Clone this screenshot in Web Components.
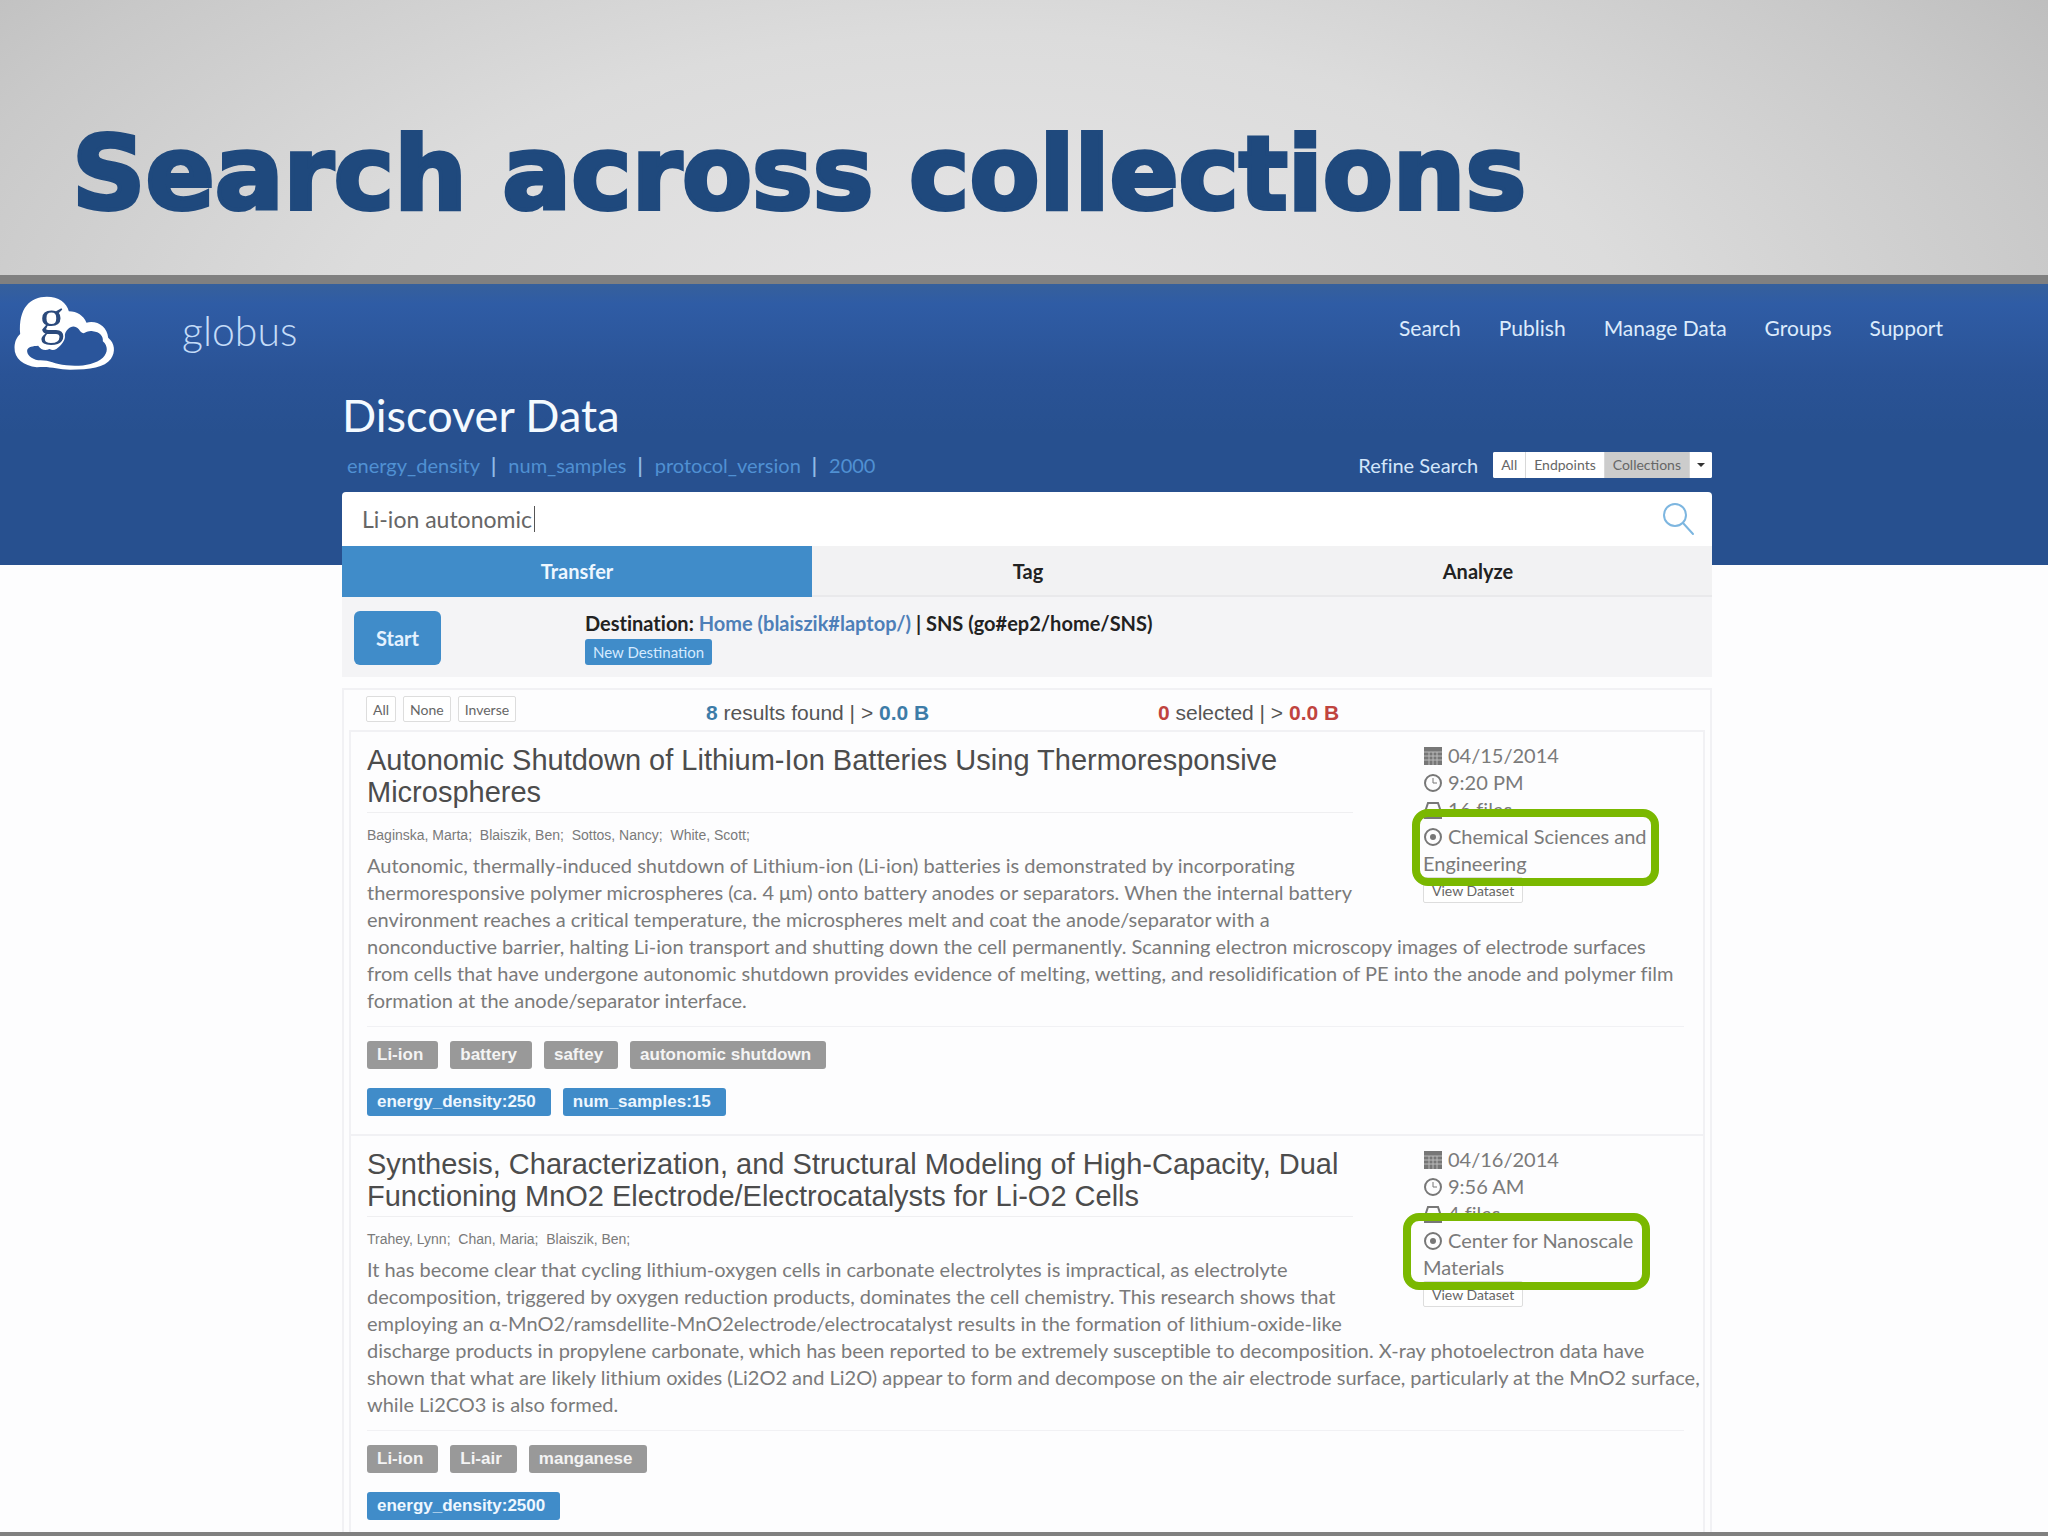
<!DOCTYPE html>
<html lang="en">
<head>
<meta charset="utf-8">
<title>Search across collections</title>
<style>
  body {
    margin: 0;
    background: #fdfdfe;
    font-family: Lato, "Open Sans", sans-serif;
    font-variant-ligatures: none;
    color: #7a7a7a;
  }
</style>
</head>
<body>

<slide-frame>
  <slide-title slot="title">Search across collections</slide-title>

  <globus-header>
    <a href="#search">Search</a>
    <a href="#publish">Publish</a>
    <a href="#manage">Manage Data</a>
    <a href="#groups">Groups</a>
    <a href="#support">Support</a>
  </globus-header>

  <discover-search query="Li-ion autonomic">
    <a href="#energy_density">energy_density</a>
    <a href="#num_samples">num_samples</a>
    <a href="#protocol_version">protocol_version</a>
    <a href="#2000">2000</a>
  </discover-search>

  <transfer-panel></transfer-panel>

  <result-list>
    <dataset-result date="04/15/2014" time="9:20 PM" files="16 files">
      <span slot="title">Autonomic Shutdown of Lithium-Ion Batteries Using Thermoresponsive<br>Microspheres</span>
      <span slot="authors">Baginska, Marta; &nbsp;Blaiszik, Ben; &nbsp;Sottos, Nancy; &nbsp;White, Scott;</span>
      <span slot="collection">Chemical Sciences and<br>Engineering</span>
      Autonomic, thermally-induced shutdown of Lithium-ion (Li-ion) batteries is demonstrated by incorporating<br>
      thermoresponsive polymer microspheres (ca. 4 μm) onto battery anodes or separators. When the internal battery<br>
      environment reaches a critical temperature, the microspheres melt and coat the anode/separator with a<br>
      nonconductive barrier, halting Li-ion transport and shutting down the cell permanently. Scanning electron microscopy images of electrode surfaces<br>
      from cells that have undergone autonomic shutdown provides evidence of melting, wetting, and resolidification of PE into the anode and polymer film<br>
      formation at the anode/separator interface.
      <tag-label slot="tags">Li-ion</tag-label>
      <tag-label slot="tags">battery</tag-label>
      <tag-label slot="tags">saftey</tag-label>
      <tag-label slot="tags">autonomic shutdown</tag-label>
      <tag-label slot="values" kind="value">energy_density:250</tag-label>
      <tag-label slot="values" kind="value">num_samples:15</tag-label>
    </dataset-result>

    <dataset-result date="04/16/2014" time="9:56 AM" files="4 files" style="--mark-left: -20px">
      <span slot="title">Synthesis, Characterization, and Structural Modeling of High-Capacity, Dual<br>Functioning MnO2 Electrode/Electrocatalysts for Li-O2 Cells</span>
      <span slot="authors">Trahey, Lynn; &nbsp;Chan, Maria; &nbsp;Blaiszik, Ben;</span>
      <span slot="collection">Center for Nanoscale<br>Materials</span>
      It has become clear that cycling lithium-oxygen cells in carbonate electrolytes is impractical, as electrolyte<br>
      decomposition, triggered by oxygen reduction products, dominates the cell chemistry. This research shows that<br>
      employing an α-MnO2/ramsdellite-MnO2electrode/electrocatalyst results in the formation of lithium-oxide-like<br>
      discharge products in propylene carbonate, which has been reported to be extremely susceptible to decomposition. X-ray photoelectron data have<br>
      shown that what are likely lithium oxides (Li2O2 and Li2O) appear to form and decompose on the air electrode surface, particularly at the MnO2 surface,<br>
      while Li2CO3 is also formed.
      <tag-label slot="tags">Li-ion</tag-label>
      <tag-label slot="tags">Li-air</tag-label>
      <tag-label slot="tags">manganese</tag-label>
      <tag-label slot="values" kind="value">energy_density:2500</tag-label>
    </dataset-result>
  </result-list>
</slide-frame>

<script>
// every element below renders its markup once, into an open root
class BaseElement extends HTMLElement {
  connectedCallback() {
    if (this.shadowRoot) return;
    this.attachShadow({ mode: "open" });
    this.shadowRoot.innerHTML = this._styles() + this._markup();
  }

  _styles() {
    return "";
  }

  _markup() {
    return "<slot></slot>";
  }
}

class SlideFrame extends BaseElement {
  _styles() {
    return `
    <style>
    :host {
      display: flex;
      flex-direction: column;
      height: 100vh;
      overflow: hidden;
    }

    .page {
      flex: 1;
      min-height: 0;
      overflow: hidden;
      border-top: 9px solid #808080;
      border-bottom: 4px solid #808080;
      background: linear-gradient(#36609c, #2f5ca5 20px, #2a5396 90px, #27508f 150px) no-repeat 0 0 / 100% 281px;
    }
    </style>
    `;
  }

  _markup() {
    return `
    <slot name="title"></slot>
    <main class="page"><slot></slot></main>
    `;
  }
}

class SlideTitle extends BaseElement {
  _styles() {
    return `
    <style>
    :host {
      display: block;
      flex: none;
      background: radial-gradient(1450px 720px at 48% 130%, #e8e7e8, #dcdcdc 45%, #c9c9c9 75%, #b6b6b6);
    }

    h1 {
      margin: 0;
      padding: 114px 72px 41px;
      font: bold 102px/120px "DejaVu Sans", sans-serif;
      -webkit-text-stroke: 4px #1f497d;
      color: #1f497d;
      white-space: nowrap;
    }
    </style>
    `;
  }

  _markup() {
    return `<h1><slot></slot></h1>`;
  }
}

class GlobusHeader extends BaseElement {
  _styles() {
    return `
    <style>
    :host {
      display: flex;
      align-items: center;
      padding: 12px 105px 0 14px;
      height: 74px;
    }

    svg {
      width: 101px;
      height: 74px;
      margin-right: 67px;
      overflow: visible;
    }

    .brand {
      flex: 1;
      padding-bottom: 6px;
      font-size: 41px;
      font-weight: 300;
      color: #c4dcf8;
    }

    nav {
      display: flex;
      gap: 38px;
      padding-bottom: 12px;
      font-size: 21px;
    }

    ::slotted(a) {
      color: #dcebfc;
      text-decoration: none;
    }
    </style>
    `;
  }

  _markup() {
    return `
    <svg viewBox="42 76 302 222" aria-hidden="true">
      <path fill="#fff" d="M60 190C54 112 90 78 140 78c35 0 60 18 66 44 25 0 44 13 53 34 32-8 62 12 65 45 20 16 23 42 8 64-18 25-62 32-122 32-40 0-60-12-100-7-40-5-68-25-67-60 1-20 7-30 17-40z"/>
      <path fill="#2a559b" d="M203 176c10-10 22-12 33 0 5 9 12 14 18 10 8-3 14-6 24-4 20 2 32 14 30 30 16 14 16 34 0 49-24 22-69 27-109 23s-51-17-85-15c-20-4-35-17-33-31 3-10 18-12 33-13 8 12 20 16 34 10 12 6 20 2 32-10 12-12 16-24 14-33 2-8 5-12 9-16z"/>
      <text x="155" y="190" text-anchor="middle" font-family="Liberation Serif, serif" font-size="150" fill="#2b4a7c">g</text>
    </svg>
    <span class="brand">globus</span>
    <nav><slot></slot></nav>
    `;
  }
}

class DiscoverSearch extends BaseElement {
  _styles() {
    return `
    <style>
    :host {
      display: block;
      padding: 17px 336px 0 342px;
    }

    h2 {
      margin: 0;
      font-size: 45px;
      font-weight: 400;
      line-height: 56px;
      color: #f4faff;
    }

    .row {
      display: flex;
      align-items: center;
      justify-content: space-between;
      height: 43px;
      padding-bottom: 6px;
    }

    .recent {
      display: flex;
      padding-left: 5px;
      font-size: 20px;
    }

    ::slotted(a) {
      color: #5090d3;
      text-decoration: none;
    }

    ::slotted(a:not(:last-of-type))::after {
      content: "|";
      padding: 0 12px 0 11px;
      font-weight: 700;
      color: #8fbbe8;
    }

    .refine {
      display: flex;
      align-items: center;
      gap: 15px;
      font-size: 20px;
      color: #d3e6fa;
    }

    .group {
      display: flex;
      height: 26px;
      border-radius: 2px;
      overflow: hidden;
      background: #fff;
    }

    .group button {
      padding: 0 8px;
      border: 0;
      border-right: 1px solid #d8d8d8;
      background: #fff;
      color: #666;
      font: 14px Lato, sans-serif;
    }

    .group .on {
      background: #ccc;
    }

    .group button:last-child {
      padding: 0 7px;
      border-right: 0;
    }

    .caret {
      display: block;
      border: 4px solid transparent;
      border-top-color: #333;
      border-bottom: 0;
    }

    .box {
      display: flex;
      align-items: center;
      height: 54px;
      padding: 0 17px 0 20px;
      border-radius: 4px 4px 0 0;
      background: #fff;
    }

    input {
      field-sizing: content;
      padding: 0;
      border: 0;
      outline: 0;
      background: none;
      font: 23px Lato, sans-serif;
      color: #666;
    }

    .cursor {
      width: 1px;
      height: 26px;
      margin-left: 2px;
      background: #555;
    }

    .go {
      margin-left: auto;
      padding: 0;
      border: 0;
      background: none;
    }

    .go svg {
      display: block;
      width: 34px;
      height: 34px;
    }
    </style>
    `;
  }

  _markup() {
    return `
    <h2>Discover Data</h2>
    <div class="row">
      <div class="recent"><slot></slot></div>
      <div class="refine">
        <span id="refine">Refine Search</span>
        <div class="group" role="group" aria-labelledby="refine">
          <button>All</button><button>Endpoints</button><button class="on">Collections</button><button aria-label="More"><span class="caret"></span></button>
        </div>
      </div>
    </div>
    <div class="box">
      <input type="text" aria-label="Search" value="${this.getAttribute("query")}">
      <span class="cursor"></span>
      <button class="go" aria-label="Run search">
        <svg viewBox="0 0 34 34" fill="none" stroke="#7db6e0" stroke-width="2" stroke-linecap="round">
          <circle cx="14" cy="13" r="11"/><path d="M22 21l10 11"/>
        </svg>
      </button>
    </div>
    `;
  }
}

class TransferPanel extends BaseElement {
  _styles() {
    return `
    <style>
    :host {
      display: block;
      margin: 0 336px 0 342px;
      background: #f4f4f6;
    }

    .tabs {
      display: grid;
      grid-template-columns: 470fr 432fr 468fr;
      height: 51px;
    }

    button {
      font-family: Lato, sans-serif;
      border: 0;
    }

    .tabs button {
      background: #f2f2f3;
      border-bottom: 2px solid #e9e9eb;
      font-size: 20px;
      font-weight: 700;
      color: #222;
    }

    .tabs .on {
      background: #408cc9;
      border-color: #408cc9;
      color: #eef7ff;
    }

    .body {
      display: flex;
      align-items: flex-start;
      gap: 144px;
      padding: 14px 12px 12px;
    }

    .start {
      width: 87px;
      height: 54px;
      border-radius: 6px;
      background: #408cc9;
      color: #e4f2ff;
      font-size: 20px;
      font-weight: 700;
    }

    p {
      margin: 0 0 4px;
      font-size: 20px;
      line-height: 24px;
      font-weight: 700;
      color: #222;
    }

    a {
      color: #4e7fb8;
      text-decoration: none;
    }

    .new {
      display: block;
      height: 26px;
      padding: 0 8px;
      border-radius: 3px;
      background: #408cc9;
      color: #d5eaff;
      font-size: 15px;
    }
    </style>
    `;
  }

  _markup() {
    return `
    <div class="tabs" role="tablist">
      <button role="tab" class="on">Transfer</button>
      <button role="tab">Tag</button>
      <button role="tab">Analyze</button>
    </div>
    <div class="body">
      <button class="start">Start</button>
      <div>
        <p>Destination: <a href="#home">Home (blaiszik#laptop/)</a> | SNS (go#ep2/home/SNS)</p>
        <button class="new">New Destination</button>
      </div>
    </div>
    `;
  }
}

class ResultList extends BaseElement {
  _styles() {
    return `
    <style>
    :host {
      display: block;
      margin: 11px 336px 0 342px;
      padding: 0 5px;
      border: 2px solid #f1f1f4;
    }

    .bar {
      display: grid;
      grid-template-columns: 340px 452px 1fr;
      align-items: start;
      height: 34px;
      padding: 6px 0 0 17px;
      font: 21px/34px "Liberation Sans", sans-serif;
      color: #555;
    }

    .pick {
      display: flex;
      gap: 7px;
    }

    button {
      height: 26px;
      padding: 0 6px;
      border: 1px solid #ddd;
      border-radius: 2px;
      background: #fff;
      color: #666;
      font: 14px Lato, sans-serif;
    }

    .found b {
      color: #3d7ca8;
    }

    .selected b {
      color: #c0443f;
    }
    </style>
    `;
  }

  _markup() {
    return `
    <div class="bar">
      <div class="pick"><button>All</button><button>None</button><button>Inverse</button></div>
      <div class="found"><b>8</b> results found | &gt; <b>0.0 B</b></div>
      <div class="selected"><b>0</b> selected | &gt; <b>0.0 B</b></div>
    </div>
    <slot></slot>
    `;
  }
}

class DatasetResult extends BaseElement {
  _styles() {
    return `
    <style>
    :host {
      display: block;
      height: 385px;
      padding: 12px 19px 5px 16px;
      border: 2px solid #f1f1f4;
      border-bottom: 0;
    }

    h3 {
      margin: 0 331px 10px 0;
      padding-bottom: 4px;
      border-bottom: 1px solid #efeff1;
      font: 29px/32px "Liberation Sans", sans-serif;
      color: #4c4c4c;
      white-space: nowrap;
    }

    .authors {
      font: 14px/24px "Liberation Sans", sans-serif;
    }

    .text {
      margin: 5px 0 0;
      padding-bottom: 12px;
      border-bottom: 1px solid #f1f1f4;
      font-size: 20px;
      line-height: 27px;
      white-space: nowrap;
    }

    .tags {
      display: flex;
      gap: 12px;
      margin: 14px 0 19px;
    }

    aside {
      float: right;
      width: 261px;
      margin-top: -2px;
      font-size: 20px;
      line-height: 27px;
      white-space: nowrap;
    }

    .line svg {
      width: 20px;
      height: 20px;
      margin-right: 5px;
      vertical-align: -3px;
      fill: none;
      stroke: #777;
      stroke-width: 2;
    }

    .marked {
      position: relative;
    }

    /* highlight ring drawn over the collection name */
    .marked::after {
      content: "";
      position: absolute;
      left: var(--mark-left, -11px);
      top: -14px;
      width: 231px;
      height: 61px;
      border: 8px solid #7ab800;
      border-radius: 16px;
    }

    button {
      display: block;
      height: 26px;
      padding: 0 8px;
      border: 1px solid #ddd;
      border-radius: 2px;
      background: #fff;
      color: #666;
      font: 14px Lato, sans-serif;
    }
    </style>
    `;
  }

  _markup() {
    return `
    <aside>
      <div class="line">
        <svg viewBox="0 0 20 20"><path fill="#777" stroke="none" d="M1 1h18v18H1z"/><path stroke="#bbb" stroke-width="1" d="M1 6h18M1 10h18M1 14h18M6 6v13M10 6v13M14 6v13"/></svg>${this.getAttribute("date")}
      </div>
      <div class="line">
        <svg viewBox="0 0 20 20"><circle cx="10" cy="10" r="8"/><path d="M10 5v5h4" stroke-width="1"/></svg>${this.getAttribute("time")}
      </div>
      <div class="line">
        <svg viewBox="0 0 20 20"><path d="M5 3h10l3 9v6H2v-6zM2 12h16"/></svg>${this.getAttribute("files")}
      </div>
      <div class="line marked">
        <svg viewBox="0 0 20 20"><circle cx="10" cy="10" r="8"/><circle cx="10" cy="10" r="3" fill="#777" stroke="none"/></svg><slot name="collection"></slot>
      </div>
      <button>View Dataset</button>
    </aside>
    <h3><slot name="title"></slot></h3>
    <div class="authors"><slot name="authors"></slot></div>
    <p class="text"><slot></slot></p>
    <div class="tags"><slot name="tags"></slot></div>
    <div class="tags"><slot name="values"></slot></div>
    `;
  }
}

class TagLabel extends BaseElement {
  _styles() {
    return `
    <style>
    :host {
      display: block;
      padding: 0 15px 0 10px;
      border-radius: 3px;
      background: #999;
      color: #f4f4f4;
      font: bold 17px/28px "Liberation Sans", sans-serif;
    }

    :host([kind="value"]) {
      background: #408cc9;
      color: #eef7ff;
    }
    </style>
    `;
  }
}

customElements.define("slide-frame", SlideFrame);
customElements.define("slide-title", SlideTitle);
customElements.define("globus-header", GlobusHeader);
customElements.define("discover-search", DiscoverSearch);
customElements.define("transfer-panel", TransferPanel);
customElements.define("result-list", ResultList);
customElements.define("dataset-result", DatasetResult);
customElements.define("tag-label", TagLabel);
</script>
</body>
</html>
